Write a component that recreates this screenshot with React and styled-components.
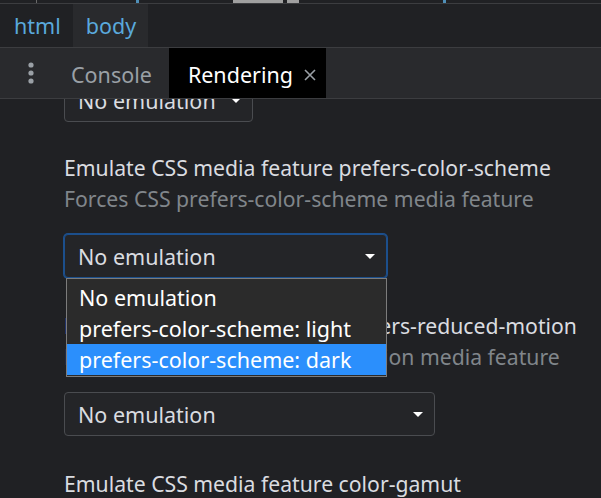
import React from "react";
import styled, { createGlobalStyle } from "styled-components";

const GlobalStyle = createGlobalStyle`
  html, body {
    margin: 0;
    padding: 0;
    background: #202124;
    font-family: "Noto Sans", "Open Sans", sans-serif;
  }
`;

const Page = styled.div`
  width: 601px;
  height: 498px;
  overflow: hidden;
  background: #202124;
  display: flex;
  flex-direction: column;
`;

const TopStrip = styled.div`
  height: 3px;
  flex: none;
  display: flex;
  border-bottom: 1px solid #3c3d40;
`;

const StripBit = styled.span`
  width: ${(p) => p.$w}px;
  margin-left: ${(p) => p.$left}px;
  background: ${(p) => p.$color};
`;

const Crumbs = styled.div`
  height: 43px;
  flex: none;
  display: flex;
  align-items: stretch;
  border-bottom: 1px solid #3c3d40;
`;

const Crumb = styled.span`
  display: flex;
  align-items: center;
  padding: 0 12px 0 ${(p) => (p.$active ? 13 : 14)}px;
  font-size: 21.5px;
  color: #5aa9dc;
  background: ${(p) => (p.$active ? "#292a2d" : "transparent")};
`;

const TabBar = styled.div`
  height: 50px;
  flex: none;
  display: flex;
  align-items: stretch;
  background: #292a2d;
  border-bottom: 1px solid #3c3d40;
`;

const MenuButton = styled.div`
  width: 62px;
  display: flex;
  align-items: center;
  justify-content: center;
`;

const Tab = styled.div`
  display: flex;
  align-items: center;
  gap: 11px;
  padding: 3px ${(p) => (p.$active ? "10px 0 19px" : "17px 0 9px")};
  font-size: 21.5px;
  color: ${(p) => (p.$active ? "#ffffff" : "#9aa0a6")};
  background: ${(p) => (p.$active ? "#000000" : "transparent")};
`;

const Viewport = styled.div`
  flex: 1;
  overflow: hidden;
  position: relative;
`;

const Content = styled.div`
  padding-left: 64px;
  margin-top: -21px;
`;

const Section = styled.div`
  margin-bottom: ${(p) => (p.$first ? 30 : 32)}px;
`;

const Title = styled.div`
  font-size: 21.2px;
  line-height: 31px;
  color: #dadce0;
  white-space: nowrap;
`;

const Subtitle = styled(Title)`
  color: #80868b;
`;

const SelectWrap = styled.div`
  position: relative;
  width: ${(p) => p.$width}px;
  margin-top: ${(p) => (p.$first ? 0 : 20)}px;
`;

const Select = styled.div`
  box-sizing: border-box;
  height: 44px;
  display: flex;
  align-items: center;
  justify-content: space-between;
  padding: 0 11px 0 13px;
  font-size: 21.5px;
  color: #dadce0;
  background: #242528;
  border: 1px solid ${(p) => (p.$focused ? "#1c4f8c" : "#4a4c50")};
  border-radius: 4px;
  box-shadow: ${(p) => (p.$focused ? "0 0 0 1px #1c4f8c" : "none")};
`;

const Arrow = styled.span`
  width: 0;
  height: 0;
  border-left: 5px solid transparent;
  border-right: 5px solid transparent;
  border-top: 5px solid #ffffff;
`;

const Dropdown = styled.div`
  position: absolute;
  top: 44px;
  left: 2px;
  right: 0;
  box-sizing: border-box;
  padding: 3px 0 1px;
  background: #2b2b2b;
  border: 1px solid #7c7c7c;
  z-index: 2;
`;

const Option = styled.div`
  height: 31px;
  display: flex;
  align-items: center;
  padding: 0 12px;
  font-size: 21.5px;
  white-space: nowrap;
  color: #ffffff;
  background: ${(p) => (p.$selected ? "#2b8ffc" : "transparent")};
`;

const Dots = () => (
  <svg width="8" height="24" viewBox="0 0 8 24">
    <circle cx="4" cy="4" r="2.6" fill="#9aa0a6" />
    <circle cx="4" cy="12" r="2.6" fill="#9aa0a6" />
    <circle cx="4" cy="20" r="2.6" fill="#9aa0a6" />
  </svg>
);

const CloseIcon = () => (
  <svg width="12" height="12" viewBox="0 0 12 12">
    <path d="M1 1 L11 11 M11 1 L1 11" stroke="#9aa0a6" strokeWidth="1.6" />
  </svg>
);

const sections = [
  {
    title: "Emulate CSS media feature prefers-color-scheme",
    sub: "Forces CSS prefers-color-scheme media feature",
    width: 323,
    open: true,
  },
  {
    title: "Emulate CSS media feature prefers-reduced-motion",
    sub: "Forces CSS prefers-reduced-motion media feature",
    width: 371,
  },
  {
    title: "Emulate CSS media feature color-gamut",
    sub: "Forces CSS color-gamut media feature",
    width: 300,
  },
];

const options = [
  "No emulation",
  "prefers-color-scheme: light",
  "prefers-color-scheme: dark",
];

export default function App() {
  return (
    <Page>
      <GlobalStyle />
      <TopStrip>
        <StripBit $left={36} $w={1} $color="#6a6a6a" />
        <StripBit $left={99} $w={3} $color="#4f8fb8" />
        <StripBit $left={94} $w={50} $color="#a0a0a0" />
        <StripBit $left={4} $w={12} $color="#a0a0a0" />
        <StripBit $left={144} $w={3} $color="#4f8fb8" />
      </TopStrip>
      <Crumbs>
        <Crumb>html</Crumb>
        <Crumb $active>body</Crumb>
      </Crumbs>
      <TabBar>
        <MenuButton>
          <Dots />
        </MenuButton>
        <Tab>Console</Tab>
        <Tab $active>
          Rendering
          <CloseIcon />
        </Tab>
      </TabBar>
      <Viewport>
        <Content>
          <Section $first>
            <SelectWrap $width={189} $first>
              <Select>
                No emulation
                <Arrow />
              </Select>
            </SelectWrap>
          </Section>
          {sections.map((s) => (
            <Section key={s.title}>
              <Title>{s.title}</Title>
              <Subtitle>{s.sub}</Subtitle>
              <SelectWrap $width={s.width}>
                <Select $focused={s.open}>
                  No emulation
                  <Arrow />
                </Select>
                {s.open && (
                  <Dropdown>
                    {options.map((o, i) => (
                      <Option key={o} $selected={i === 2}>
                        {o}
                      </Option>
                    ))}
                  </Dropdown>
                )}
              </SelectWrap>
            </Section>
          ))}
        </Content>
      </Viewport>
    </Page>
  );
}
